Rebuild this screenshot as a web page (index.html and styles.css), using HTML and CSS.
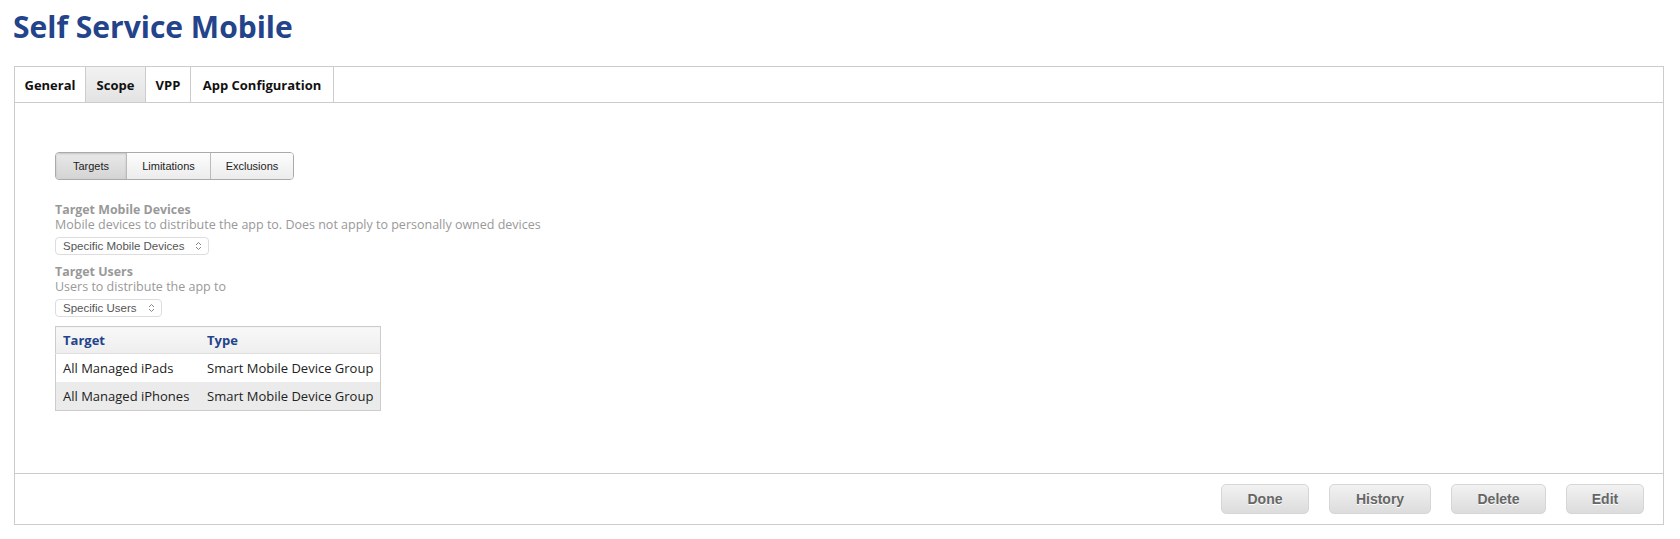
FILE: index.html
```html
<!DOCTYPE html>
<html lang="en">
<head>
    <meta charset="UTF-8">
    <title>Self Service Mobile</title>
    <link rel="stylesheet" href="styles.css">
</head>
<body>
    <!-- Page title -->
    <h1 class="pageTitle">Self Service Mobile</h1>

    <div class="panel">
        <!-- Tabs across the top -->
        <div class="tabBar">
            <div class="tab">General</div>
            <div class="tab active">Scope</div>
            <div class="tab">VPP</div>
            <div class="tab">App Configuration</div>
        </div>

        <div class="panelBody">
            <!-- Targets / Limitations / Exclusions switch -->
            <div class="segmented">
                <div class="segment active">Targets</div>
                <div class="segment">Limitations</div>
                <div class="segment">Exclusions</div>
            </div>

            <div class="field">
                <div class="fieldLabel">Target Mobile Devices</div>
                <div class="fieldHelp">Mobile devices to distribute the app to. Does not apply to personally owned devices</div>
                <div class="selectBox">Specific Mobile Devices <span class="chevrons"><svg width="7" height="10" viewBox="0 0 7 10"><path d="M1 4 L3.5 1.5 L6 4 M1 6 L3.5 8.5 L6 6" fill="none" stroke="#888" stroke-width="1"/></svg></span></div>
            </div>

            <div class="field">
                <div class="fieldLabel">Target Users</div>
                <div class="fieldHelp">Users to distribute the app to</div>
                <div class="selectBox">Specific Users <span class="chevrons"><svg width="7" height="10" viewBox="0 0 7 10"><path d="M1 4 L3.5 1.5 L6 4 M1 6 L3.5 8.5 L6 6" fill="none" stroke="#888" stroke-width="1"/></svg></span></div>
            </div>

            <!-- Targets table -->
            <table class="scopeTable">
                <thead>
                    <tr>
                        <th>Target</th>
                        <th>Type</th>
                    </tr>
                </thead>
                <tbody>
                    <tr>
                        <td>All Managed iPads</td>
                        <td>Smart Mobile Device Group</td>
                    </tr>
                    <tr class="alt">
                        <td>All Managed iPhones</td>
                        <td>Smart Mobile Device Group</td>
                    </tr>
                </tbody>
            </table>
        </div>

        <!-- Buttons at the bottom -->
        <div class="panelFooter">
            <button class="btn">Done</button>
            <button class="btn">History</button>
            <button class="btn">Delete</button>
            <button class="btn">Edit</button>
        </div>
    </div>
</body>
</html>
```

FILE: styles.css
```css
/* General body styling */
body {
    margin: 0;
    font-family: "Open Sans", "DejaVu Sans", sans-serif;
    color: #222;
    background: #fff;
}

/* Page title */
.pageTitle {
    margin: 0;
    padding: 8px 0 0 13px;
    height: 66px;
    box-sizing: border-box;
    font-size: 30px;
    font-weight: 700;
    line-height: 38px;
    color: #23438a;
}

/* Main box */
.panel {
    margin: 0 16px 0 14px;
    border: 1px solid #ccc;
}

/* Tabs */
.tabBar {
    display: flex;
    height: 35px;
    border-bottom: 1px solid #ccc;
}

.tab {
    display: flex;
    align-items: center;
    justify-content: center;
    box-sizing: border-box;
    font-size: 13px;
    font-weight: 700;
    color: #111;
    border-right: 1px solid #ccc;
}

.tab:nth-child(1) { width: 71px; }
.tab:nth-child(2) { width: 60px; }
.tab:nth-child(3) { width: 45px; }
.tab:nth-child(4) { width: 143px; }

.tab.active {
    background: linear-gradient(#f2f2f2, #e3e3e3);
}

/* Content */
.panelBody {
    height: 370px;
    padding: 49px 0 0 40px;
    box-sizing: border-box;
}

/* Segmented control */
.segmented {
    display: inline-flex;
    height: 28px;
    border: 1px solid #aaa;
    border-radius: 4px;
    overflow: hidden;
    margin-bottom: 22px;
    box-sizing: border-box;
}

.segment {
    display: flex;
    align-items: center;
    justify-content: center;
    font-family: "Liberation Sans", sans-serif;
    font-size: 11px;
    color: #222;
    background: linear-gradient(#fdfdfd, #ececec);
    border-left: 1px solid #bbb;
}

.segment:nth-child(1) { width: 70px; border-left: none; }
.segment:nth-child(2) { width: 83px; }
.segment:nth-child(3) { width: 82px; }

.segment.active {
    background: linear-gradient(#e9e9e9, #d4d4d4);
    box-shadow: inset 0 1px 2px rgba(0, 0, 0, 0.15);
}

/* Form fields */
.field {
    margin-bottom: 9px;
}

.fieldLabel {
    font-size: 12.4px;
    font-weight: 700;
    color: #999;
    line-height: 15px;
}

.fieldHelp {
    font-size: 12.5px;
    color: #999;
    line-height: 16px;
}

.selectBox {
    display: inline-flex;
    align-items: center;
    gap: 11px;
    height: 16px;
    padding: 0 6px 0 7px;
    margin-top: 1px;
    border: 1px solid #ddd;
    border-radius: 4px;
    font-family: "Liberation Sans", sans-serif;
    font-size: 11.5px;
    color: #555;
    background: #fff;
}

.chevrons {
    display: flex;
    align-items: center;
}

/* Targets table */
.scopeTable {
    margin-top: 2px;
    border-collapse: collapse;
    border: 1px solid #ccc;
    font-size: 13px;
}

.scopeTable th {
    height: 26px;
    padding: 0 6px 0 7px;
    text-align: left;
    color: #23438a;
    font-weight: 700;
    background: linear-gradient(#f8f8f8, #eeeeee);
    border-bottom: 1px solid #e0e0e0;
}

.scopeTable td {
    height: 28px;
    padding: 0 7px 0 7px;
    color: #222;
    white-space: nowrap;
}

.scopeTable th:first-child,
.scopeTable td:first-child {
    width: 130px;
}

.scopeTable tr.alt td {
    background: #ebebeb;
}

/* Footer with buttons */
.panelFooter {
    display: flex;
    justify-content: flex-end;
    align-items: center;
    gap: 20px;
    height: 50px;
    padding-right: 19px;
    border-top: 1px solid #ccc;
}

.btn {
    height: 30px;
    padding: 0;
    border: 1px solid #d6d6d6;
    border-radius: 5px;
    background: linear-gradient(#f2f2f2, #dcdcdc);
    font-family: "Liberation Sans", sans-serif;
    font-size: 14px;
    font-weight: 700;
    color: #666;
    text-shadow: 0 1px 0 #fff;
}

.btn:nth-child(1) { width: 88px; }
.btn:nth-child(2) { width: 102px; }
.btn:nth-child(3) { width: 95px; }
.btn:nth-child(4) { width: 78px; }
```
